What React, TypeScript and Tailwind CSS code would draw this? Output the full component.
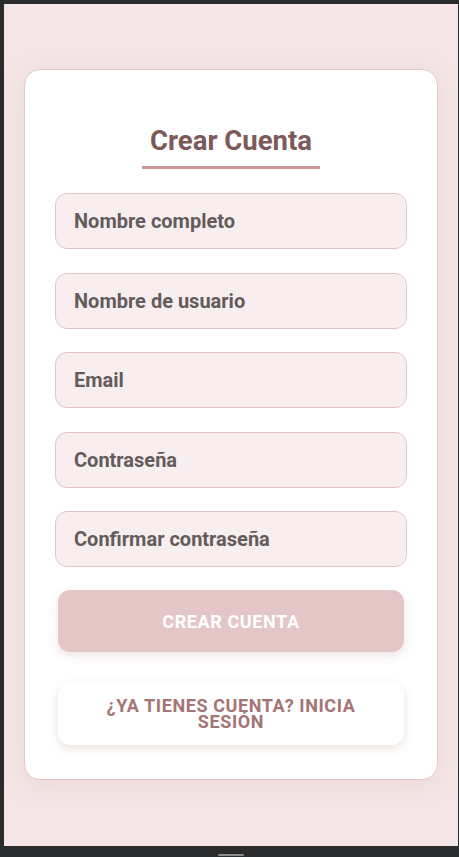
import React from 'react';

const fields = ['Nombre completo', 'Nombre de usuario', 'Email', 'Contraseña', 'Confirmar contraseña'];

const App: React.FC = () => {
  return (
    <div className="h-screen w-full bg-[#2a2b2d] flex flex-col pt-[4px] pl-[4px] pr-[1px] font-['Roboto',sans-serif]">
      <div className="flex-1 bg-[#f4e6e6] flex items-start pt-[65px] pl-[20px]">
        <div className="w-[414px] h-[711px] bg-white border border-[#e6c8c8] rounded-[16px] shadow-[0_4px_24px_rgba(200,150,150,0.18)] px-[30px] pt-[55px] flex flex-col">
          <div className="flex justify-center mb-[24px]">
            <h1 className="text-[27.5px] font-bold text-[#7d5a5a] leading-[32px] px-[8px] pb-[9px] border-b-[3px] border-[#c99494]">
              Crear Cuenta
            </h1>
          </div>

          <div className="flex flex-col gap-[23.5px]">
            {fields.map((f) => (
              <input
                key={f}
                type="text"
                placeholder={f}
                className="h-[56px] w-full rounded-[12px] bg-[#f9eeef] border border-[#e3c4c6] px-[18px] text-[20px] font-bold text-[#5f5757] placeholder:text-[#645b5b] outline-none"
              />
            ))}
          </div>

          <button className="mt-[23px] mx-[3px] h-[62px] rounded-[12px] bg-[#e3c6c6] text-white text-[18px] font-bold tracking-[0.6px] shadow-[0_4px_10px_rgba(200,150,150,0.25)]">
            CREAR CUENTA
          </button>

          <button className="mt-[31px] mx-[3px] h-[62px] rounded-[12px] bg-white text-[#a57474] text-[18px] font-bold tracking-[0.6px] leading-[16px] px-[30px] shadow-[0_3px_10px_rgba(200,150,150,0.3)]">
            ¿YA TIENES CUENTA? INICIA SESIÓN
          </button>
        </div>
      </div>
      <div className="h-[11px] flex justify-center items-end pb-[1px]">
        <div className="w-[26px] h-[2px] bg-[#8a8a8a] rounded-full" />
      </div>
    </div>
  );
};

export default App;
